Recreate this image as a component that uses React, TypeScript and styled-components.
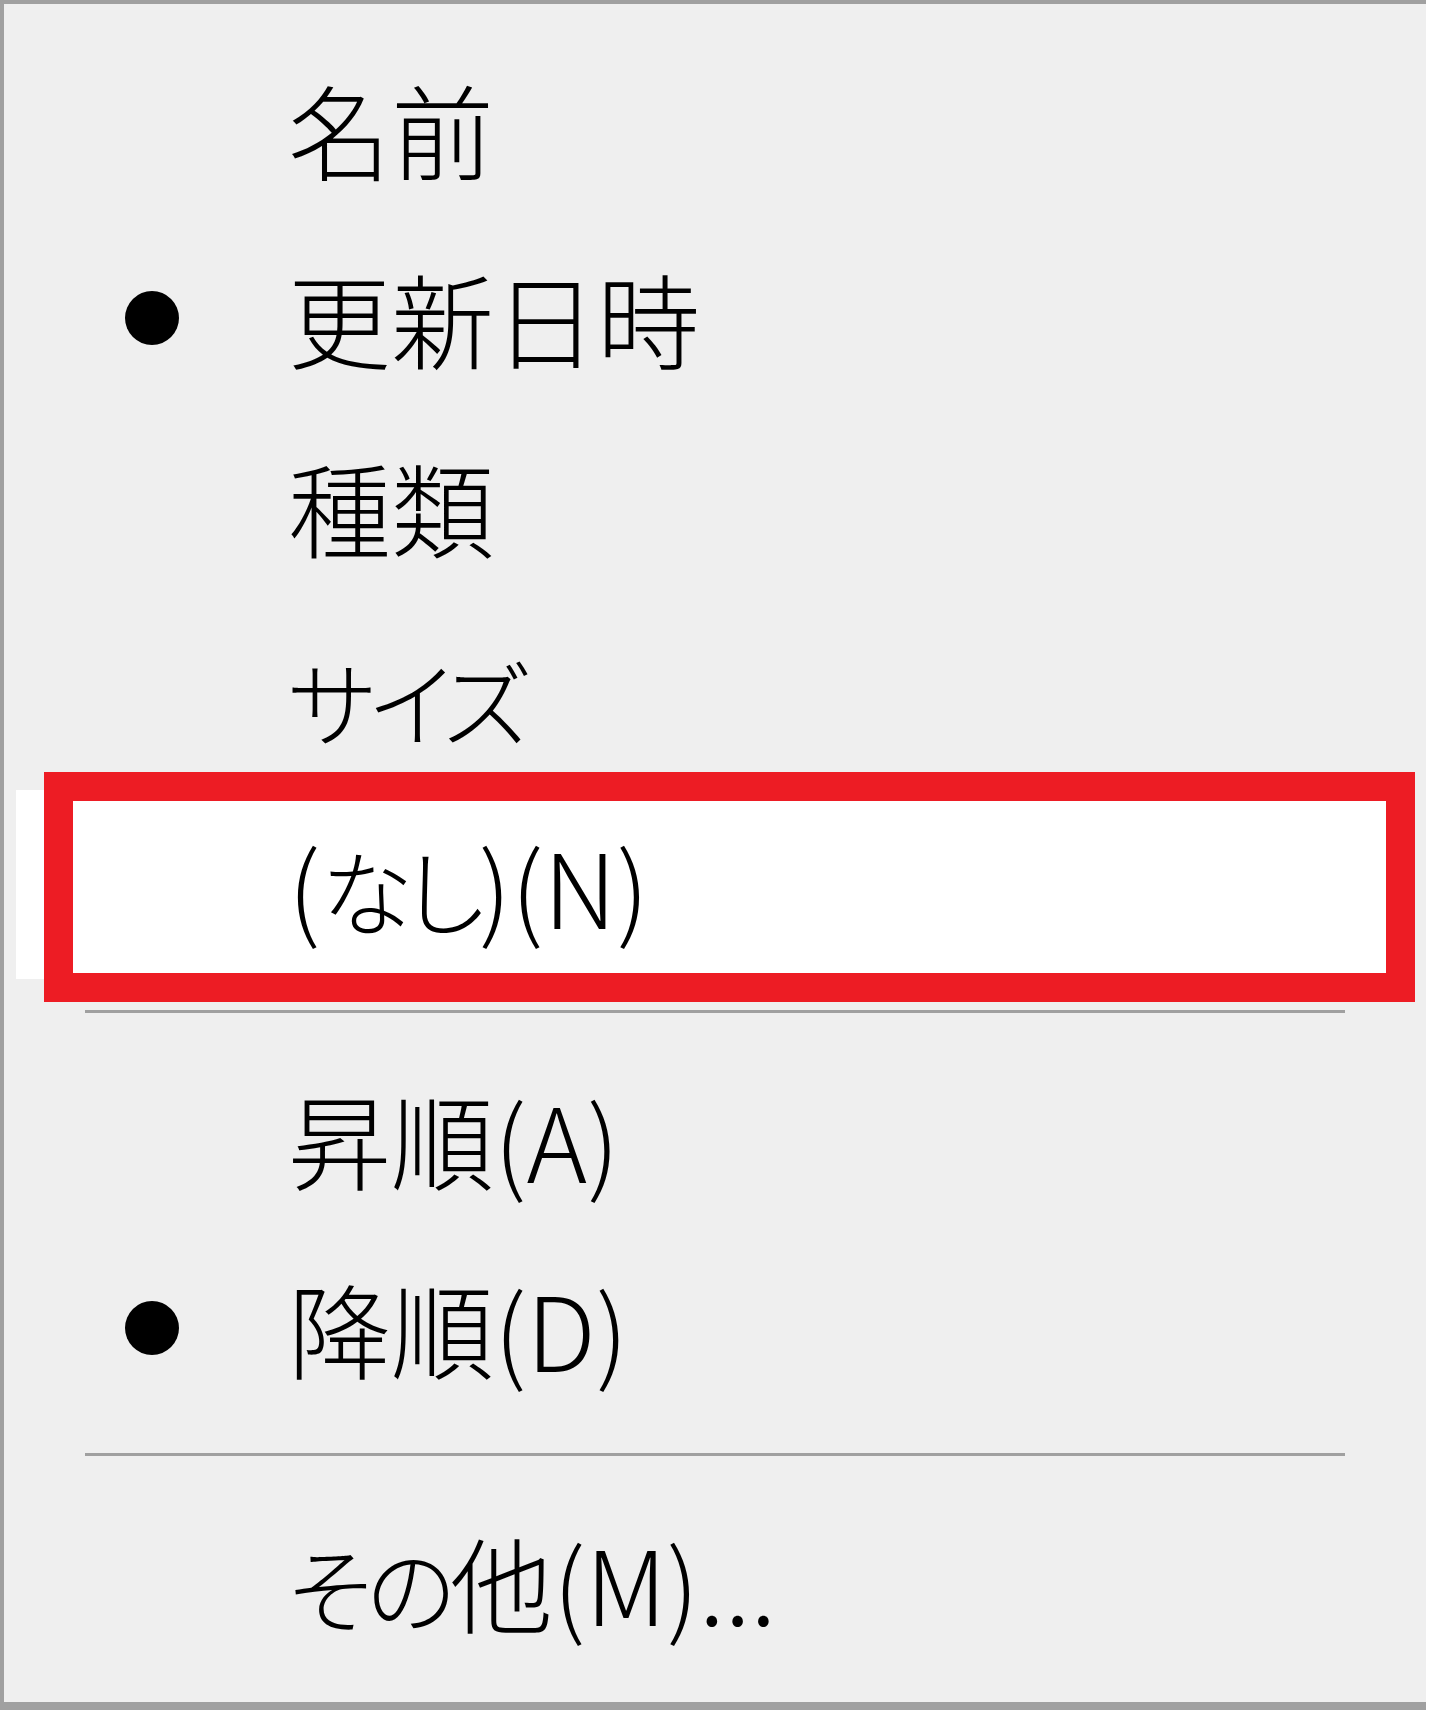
import React from 'react';
import styled, { createGlobalStyle } from 'styled-components';

// Styles
const GlobalStyle = createGlobalStyle`
  html, body {
    margin: 0;
    padding: 0;
    background: #ffffff;
  }
  body {
    font-family: "Noto Sans CJK JP", "Noto Sans", sans-serif;
  }
`;

const Menu = styled.div`
  box-sizing: border-box;
  width: 1426px;
  height: 1710px;
  padding: 30px 0 26px;
  display: flex;
  flex-direction: column;
  background: #efefef;
  border-top: 4px solid #a0a0a0;
  border-left: 4px solid #a0a0a0;
  border-bottom: 8px solid #a0a0a0;
  overflow: hidden;
`;

const Item = styled.div<{ $active?: boolean }>`
  position: relative;
  flex: 0 0 189px;
  margin: 0 12px;
  display: flex;
  align-items: center;
  background: ${(p) => (p.$active ? '#ffffff' : 'transparent')};
`;

const Check = styled.span`
  flex: 0 0 272px;
  display: flex;
  justify-content: center;
  align-items: center;
`;

const Dot = styled.span`
  width: 54px;
  height: 54px;
  border-radius: 50%;
  background: #000000;
`;

const Label = styled.span`
  font-size: 103px;
  font-weight: 300;
  line-height: 1;
  color: #000000;
  white-space: nowrap;
`;

// kana in the Windows UI font are proportional and a little smaller
const Kana = styled.span`
  font-size: 0.9em;
  font-feature-settings: 'palt';
  letter-spacing: -0.06em;
`;

const Separator = styled.div`
  flex: 0 0 65px;
  display: flex;
  align-items: center;
  margin: 0 81px;

  &::after {
    content: '';
    flex: 1;
    height: 3px;
    background: #a0a0a0;
  }
`;

// red annotation frame drawn over the hovered item
const Highlight = styled.div`
  position: absolute;
  top: -18px;
  bottom: -23px;
  left: 28px;
  right: -1px;
  border: 29px solid #ed1c24;
  pointer-events: none;
`;

type Entry =
  | { kind: 'item'; label: React.ReactNode; checked?: boolean; active?: boolean }
  | { kind: 'sep' };

const entries: Entry[] = [
  { kind: 'item', label: '名前' },
  { kind: 'item', label: '更新日時', checked: true },
  { kind: 'item', label: '種類' },
  { kind: 'item', label: <Kana>サイズ</Kana> },
  {
    kind: 'item',
    label: (
      <>
        (<Kana>なし</Kana>)(N)
      </>
    ),
    active: true,
  },
  { kind: 'sep' },
  { kind: 'item', label: '昇順(A)' },
  { kind: 'item', label: '降順(D)', checked: true },
  { kind: 'sep' },
  {
    kind: 'item',
    label: (
      <>
        <Kana>その</Kana>他(M)...
      </>
    ),
  },
];

const App: React.FC = () => {
  return (
    <>
      <GlobalStyle />
      <Menu>
        {entries.map((e, i) =>
          e.kind === 'sep' ? (
            <Separator key={i} />
          ) : (
            <Item key={i} $active={e.active}>
              <Check>{e.checked && <Dot />}</Check>
              <Label>{e.label}</Label>
              {e.active && <Highlight />}
            </Item>
          )
        )}
      </Menu>
    </>
  );
};

export default App;
